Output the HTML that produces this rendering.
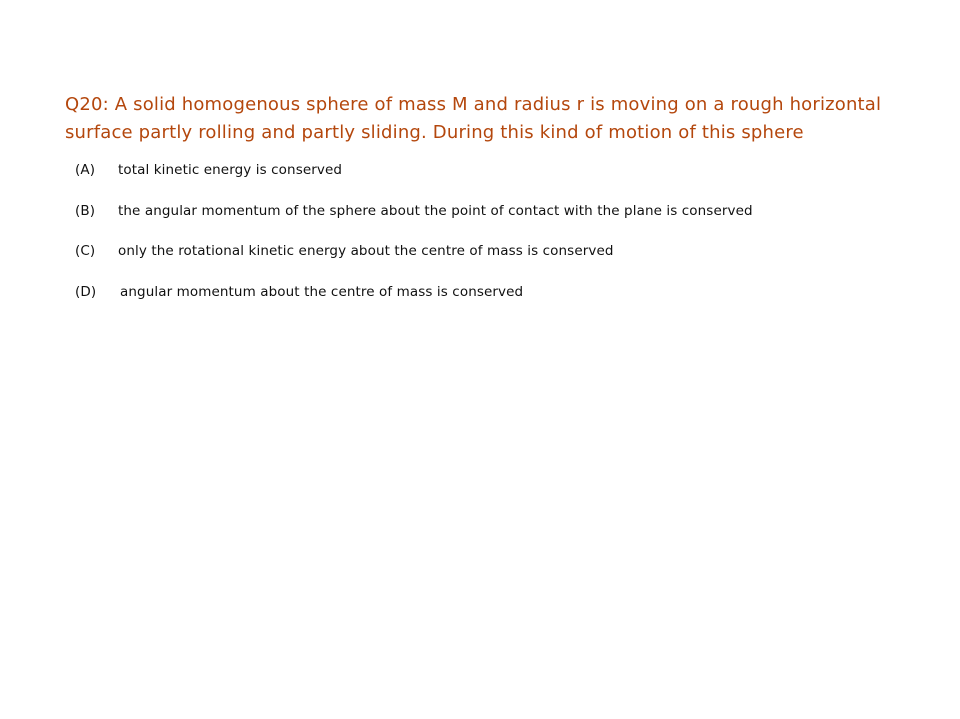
<!DOCTYPE html>
<html><head><style>
body{margin:0;width:960px;height:719px;background:#fff;position:relative;font-family:"DejaVu Sans","Liberation Sans",sans-serif;overflow:hidden}
.q{position:absolute;left:65px;top:91px;color:#b4470d;font-size:18px;line-height:28px;letter-spacing:0.18px;white-space:nowrap}
.o{position:absolute;font-size:13.5px;color:#111;letter-spacing:0.1px}
.o span{position:absolute;left:0;white-space:nowrap}
</style></head><body>
<div class="q">Q20: A solid homogenous sphere of mass M and radius r is moving on a rough horizontal<br>surface partly rolling and partly sliding. During this kind of motion of this sphere</div>
<div class="o" style="left:75px;top:162px"><span>(A)</span><span style="left:43px">total kinetic energy is conserved</span></div>
<div class="o" style="left:75px;top:203px"><span>(B)</span><span style="left:43px">the angular momentum of the sphere about the point of contact with the plane is conserved</span></div>
<div class="o" style="left:75px;top:243px"><span>(C)</span><span style="left:43px">only the rotational kinetic energy about the centre of mass is conserved</span></div>
<div class="o" style="left:75px;top:284px"><span>(D)</span><span style="left:45px">angular momentum about the centre of mass is conserved</span></div>
</body></html>
